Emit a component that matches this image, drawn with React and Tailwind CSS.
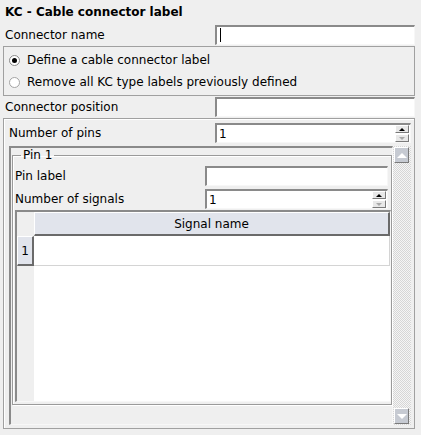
import React from "react";

const sunken =
  "border-t-2 border-l-2 border-b border-r border-t-[#8a8a8a] border-l-[#8a8a8a] border-b-[#f7f7f7] border-r-[#f7f7f7]";
const raised =
  "border-t border-l border-b border-r border-t-white border-l-white border-b-[#7a7a7a] border-r-[#7a7a7a]";

function Entry({ className = "", cursor = false, value = "" }) {
  return (
    <div className={`h-[20px] bg-white ${sunken} flex items-center pl-[2px] ${className}`}>
      {cursor ? <div className="w-px h-[14px] bg-black ml-px" /> : null}
      {value ? <span className="leading-[14px]">{value}</span> : null}
    </div>
  );
}

function Spin({ className = "" }) {
  return (
    <div className={`h-[20px] bg-white ${sunken} flex items-center pl-[2px] ${className}`}>
      <span className="leading-[14px]">1</span>
      <div className="ml-auto mr-[1px] flex flex-col gap-px">
        <div className={`w-[14px] h-[8px] bg-[#e8e8e8] ${raised} flex items-center justify-center`}>
          <div className="w-0 h-0 border-l-[3px] border-r-[3px] border-b-[3px] border-l-transparent border-r-transparent border-b-black" />
        </div>
        <div className={`w-[14px] h-[8px] bg-[#e8e8e8] ${raised} flex items-center justify-center`}>
          <div className="w-0 h-0 border-l-[3px] border-r-[3px] border-t-[3px] border-l-transparent border-r-transparent border-t-[#a8a8a8]" />
        </div>
      </div>
    </div>
  );
}

function Radio({ checked = false, label }) {
  return (
    <div className="h-[22px] flex items-center">
      <div
        className={`w-[11px] h-[11px] rounded-full bg-white border flex items-center justify-center ${
          checked ? "border-[#8a8a8a]" : "border-[#a4a4a4]"
        }`}
      >
        {checked ? <div className="w-[5px] h-[5px] rounded-full bg-black" /> : null}
      </div>
      <span className="ml-[7px]">{label}</span>
    </div>
  );
}

export default function App() {
  return (
    <div className="w-[421px] h-[435px] bg-[#efefef] text-black text-[12px] leading-[14px] font-['DejaVu_Sans',sans-serif] overflow-hidden">
      <div className="h-[23px] pl-[5px] flex items-center font-bold">KC - Cable connector label</div>

      <div className="h-[23px] flex items-center pl-[5px]">
        <span>Connector name</span>
        <Entry className="ml-auto mr-[6px] w-[200px]" cursor />
      </div>

      <div className="ml-[3px] w-[412px] h-[50px] border border-[#a0a0a0] pt-[2px] pl-[5px]">
        <Radio checked label="Define a cable connector label" />
        <Radio label="Remove all KC type labels previously defined" />
      </div>

      <div className="h-[22px] flex items-center pl-[5px]">
        <span>Connector position</span>
        <Entry className="ml-auto mr-[6px] w-[200px]" />
      </div>

      <div className="ml-[3px] w-[412px] h-[311px] border border-[#a0a0a0] shadow-[inset_1px_1px_0_#ffffff] flex flex-col">
        <div className="mt-[4px] h-[20px] flex items-center pl-[5px]">
          <span>Number of pins</span>
          <Spin className="ml-auto mr-[3px] w-[196px]" />
        </div>

        <div className="mt-[3px] ml-[5px] w-[402px] h-[279px] flex">
          <div className={`w-[384px] h-full ${sunken} pl-px`}>
            <fieldset className="w-[380px] border border-[#9a9a9a] shadow-[inset_1px_1px_0_#ffffff,1px_1px_0_#ffffff] pl-[2px] pb-[2px]">
              <legend className="ml-[6px] px-[2px] leading-[14px]">Pin 1</legend>
              <div className="mt-[4px] h-[20px] flex items-center">
                <span>Pin label</span>
                <Entry className="ml-auto mr-[3px] w-[183px]" />
              </div>
              <div className="mt-[3px] h-[20px] flex items-center">
                <span>Number of signals</span>
                <Spin className="ml-auto mr-[3px] w-[183px]" />
              </div>
              <div className={`mt-[1px] w-[376px] h-[192px] bg-white ${sunken} flex flex-col`}>
                <div className="h-[24px] flex">
                  <div className="w-[17px] bg-[#efefef]" />
                  <div className="flex-1 bg-[#e1e4ec] border-b-2 border-r-2 border-b-[#6a6a6a] border-r-[#6a6a6a] border-t border-l border-t-white border-l-white flex items-center justify-center">
                    Signal name
                  </div>
                </div>
                <div className="h-[30px] flex">
                  <div className="w-[17px] bg-[#e1e4ec] border-b-2 border-r-2 border-b-[#6a6a6a] border-r-[#6a6a6a] border-t border-l border-t-white border-l-white flex items-center justify-center">
                    1
                  </div>
                  <div className="flex-1 bg-white border-b border-r border-[#d4d4d4]" />
                </div>
                <div className="flex-1 flex">
                  <div className="w-[17px] bg-[#efefef]" />
                  <div className="flex-1 bg-white" />
                </div>
              </div>
            </fieldset>
          </div>
          <div className="w-[18px] h-full flex flex-col justify-between py-px pl-px bg-[image:repeating-conic-gradient(#d6d6d6_0%_25%,#f5f5f5_0%_50%)] bg-[length:2px_2px]">
            <div className={`w-[15px] h-[16px] bg-[#c6cad2] ${raised} flex items-center justify-center`}>
              <div className="w-0 h-0 border-l-[5px] border-r-[5px] border-b-[5px] border-l-transparent border-r-transparent border-b-white" />
            </div>
            <div className={`w-[15px] h-[16px] bg-[#c6cad2] ${raised} flex items-center justify-center`}>
              <div className="w-0 h-0 border-l-[5px] border-r-[5px] border-t-[5px] border-l-transparent border-r-transparent border-t-white" />
            </div>
          </div>
        </div>
      </div>
    </div>
  );
}
